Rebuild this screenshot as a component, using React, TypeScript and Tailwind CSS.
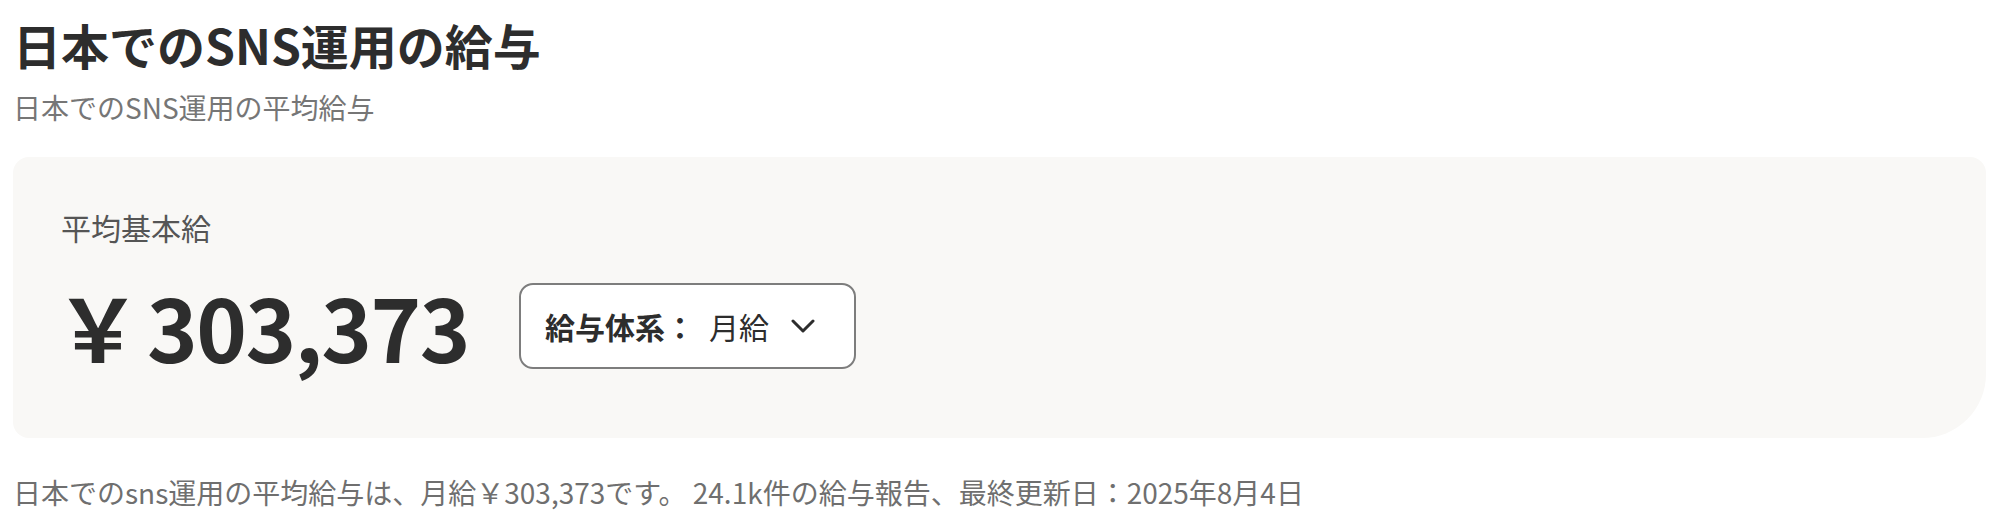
export default function App() {
  return (
    <div className="min-h-screen bg-white px-[13px] pt-[14px] font-['Noto_Sans_CJK_JP','Noto_Sans',sans-serif] text-[#2d2d2d]">
      <h1 className="text-[48px] font-bold leading-[60px]">日本でのSNS運用の給与</h1>
      <p className="mt-[12px] text-[28px] leading-[42px] text-[#767676]">日本でのSNS運用の平均給与</p>

      <section className="mt-[29px] rounded-[16px] rounded-br-[64px] bg-[#f9f8f6] px-[48px] pt-[48px] pb-[69px]">
        <p className="text-[30px] leading-[45px] text-[#555555]">平均基本給</p>
        <div className="mt-[33px] flex items-center gap-[50px]">
          <div className="text-[86px] font-bold leading-none">
            <span className="-ml-[6px] mr-[6px]">￥</span>
            <span className="tracking-[-1.5px]">303,373</span>
          </div>
          <button className="flex h-[86px] w-[337px] items-center rounded-[14px] border-2 border-[#7d7d7d] bg-white px-[24px]">
            <span className="text-[30px] font-bold leading-none">給与体系：</span>
            <span className="ml-[14px] text-[30px] leading-none">月給</span>
            <svg className="ml-[22px]" width="24" height="14" viewBox="0 0 24 14" fill="none">
              <polyline points="2,2 12,12 22,2" stroke="#2d2d2d" strokeWidth="3" strokeLinecap="round" strokeLinejoin="round" />
            </svg>
          </button>
        </div>
      </section>

      <p className="mt-[33px] text-[28px] leading-[42px] text-[#6f6f6f]">
        日本でのsns運用の平均給与は、月給￥303,373です。 24.1k件の給与報告、最終更新日：2025年8月4日
      </p>
    </div>
  )
}
